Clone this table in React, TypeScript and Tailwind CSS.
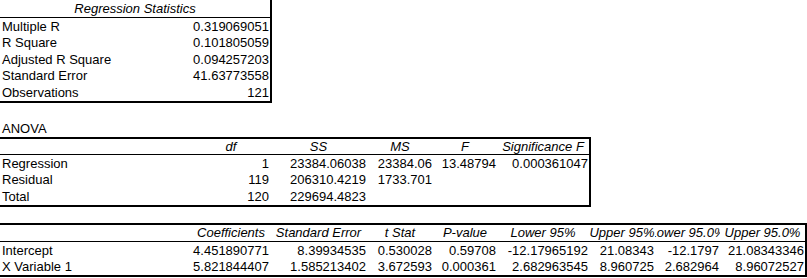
import React from 'react';

type Col = 'A' | 'B' | 'C' | 'D' | 'E' | 'F' | 'G' | 'H' | 'I';
const W: Record<Col, string> = {
  A: 'w-[192px]',
  B: 'w-[78px]',
  C: 'w-[97px]',
  D: 'w-[66px]',
  E: 'w-[64px]',
  F: 'w-[92px]',
  G: 'w-[66px]',
  H: 'w-[65px]',
  I: 'w-[85px]',
};

function L({ c, children }: { c: Col; children?: React.ReactNode }) {
  return <div className={`${W[c]} shrink-0 overflow-hidden whitespace-nowrap pl-[2px]`}>{children}</div>;
}
function N({ c, children }: { c: Col; children?: React.ReactNode }) {
  return <div className={`${W[c]} shrink-0 overflow-hidden whitespace-nowrap text-right pr-[1px]`}>{children}</div>;
}
function H({ c, children }: { c: Col; children?: React.ReactNode }) {
  return (
    <div className={`${W[c]} shrink-0 overflow-hidden whitespace-nowrap flex justify-center italic`}>
      <span className="shrink-0">{children}</span>
    </div>
  );
}

export default function App() {
  return (
    <div className="w-[807px] h-[278px] bg-white text-black text-[13px] font-['Liberation_Sans',Arial,sans-serif] overflow-hidden">
      {/* Regression Statistics */}
      <div className="w-[272px] border-r-2 border-b-2 border-black">
        <div className="h-[18px] leading-[17px] border-b border-black flex justify-center italic">Regression Statistics</div>
        <div className="flex h-[17px] leading-[17px]"><L c="A">Multiple R</L><N c="B">0.319069051</N></div>
        <div className="flex h-[16px] leading-[16px]"><L c="A">R Square</L><N c="B">0.101805059</N></div>
        <div className="flex h-[17px] leading-[17px]"><L c="A">Adjusted R Square</L><N c="B">0.094257203</N></div>
        <div className="flex h-[16px] leading-[16px]"><L c="A">Standard Error</L><N c="B">41.63773558</N></div>
        <div className="flex h-[17px] leading-[17px]"><L c="A">Observations</L><N c="B">121</N></div>
      </div>

      <div className="h-[17px]" />
      <div className="flex h-[17px] leading-[17px]"><L c="A">ANOVA</L></div>

      {/* ANOVA */}
      <div className="w-[591px] border-t-2 border-r-2 border-b-2 border-black">
        <div className="flex h-[16px] leading-[15px] border-b border-black">
          <L c="A" />
          <H c="B">df</H>
          <H c="C">SS</H>
          <H c="D">MS</H>
          <H c="E">F</H>
          <H c="F">Significance F</H>
        </div>
        <div className="flex h-[17px] leading-[17px]">
          <L c="A">Regression</L>
          <N c="B">1</N>
          <N c="C">23384.06038</N>
          <N c="D">23384.06</N>
          <N c="E">13.48794</N>
          <N c="F">0.000361047</N>
        </div>
        <div className="flex h-[16px] leading-[16px]">
          <L c="A">Residual</L>
          <N c="B">119</N>
          <N c="C">206310.4219</N>
          <N c="D">1733.701</N>
          <N c="E" />
          <N c="F" />
        </div>
        <div className="flex h-[17px] leading-[17px]">
          <L c="A">Total</L>
          <N c="B">120</N>
          <N c="C">229694.4823</N>
          <N c="D" />
          <N c="E" />
          <N c="F" />
        </div>
      </div>

      <div className="h-[16px]" />

      {/* Coefficients */}
      <div className="w-[807px] border-t-2 border-r-2 border-b-2 border-black">
        <div className="flex h-[17px] leading-[16px] border-b border-black">
          <L c="A" />
          <H c="B">Coefficients</H>
          <H c="C">Standard Error</H>
          <H c="D">t Stat</H>
          <H c="E">P-value</H>
          <H c="F">Lower 95%</H>
          <H c="G">Upper 95%</H>
          <H c="H">Lower 95.0%</H>
          <H c="I">Upper 95.0%</H>
        </div>
        <div className="flex h-[17px] leading-[17px]">
          <L c="A">Intercept</L>
          <N c="B">4.451890771</N>
          <N c="C">8.39934535</N>
          <N c="D">0.530028</N>
          <N c="E">0.59708</N>
          <N c="F">-12.17965192</N>
          <N c="G">21.08343</N>
          <N c="H">-12.1797</N>
          <N c="I">21.08343346</N>
        </div>
        <div className="flex h-[16px] leading-[16px]">
          <L c="A">X Variable 1</L>
          <N c="B">5.821844407</N>
          <N c="C">1.585213402</N>
          <N c="D">3.672593</N>
          <N c="E">0.000361</N>
          <N c="F">2.682963545</N>
          <N c="G">8.960725</N>
          <N c="H">2.682964</N>
          <N c="I">8.96072527</N>
        </div>
      </div>
    </div>
  );
}
